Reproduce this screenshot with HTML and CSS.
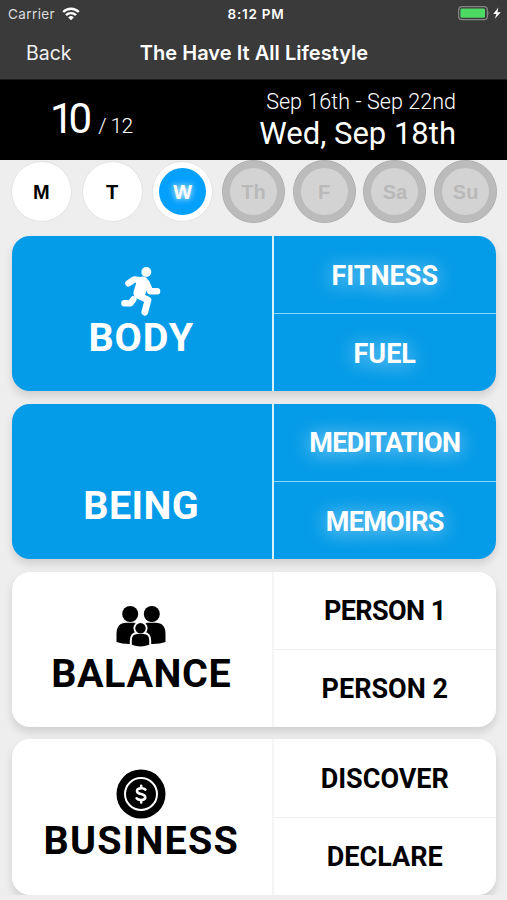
FILE: index.html
```
<!DOCTYPE html>
<html lang="en">
<head>
    <meta charset="UTF-8">
    <meta name="viewport" content="width=device-width, initial-scale=1.0">
    <title>The Have It All Lifestyle</title>
    <link rel="stylesheet" href="styles.css">
</head>
<body>
    <header class="top">
        <div class="status-bar">
            <div class="carrier">
                <span>Carrier</span>
                <svg width="18" height="14" viewBox="0 0 18 14" fill="none" stroke="#fff" stroke-width="2.4">
                    <path d="M1.2 5 A11 11 0 0 1 16.8 5"/>
                    <path d="M4 8.2 A7 7 0 0 1 14 8.2"/>
                    <path d="M9 13.2 L6.2 10.4 A4 4 0 0 1 11.8 10.4 Z" fill="#fff" stroke="none"/>
                </svg>
            </div>
            <div class="clock">8:12 PM</div>
            <div class="battery">
                <svg width="44" height="16" viewBox="0 0 44 16">
                    <rect x="0.6" y="0.6" width="28.8" height="13" rx="3.4" fill="none" stroke="#858585" stroke-width="1.2"/>
                    <rect x="2.4" y="2.4" width="24.6" height="9.4" rx="1.4" fill="#4cd964"/>
                    <path d="M30.6 4.6 Q32.4 7.1 30.6 9.6 Z" fill="#858585"/>
                    <path d="M40.4 1.6 L35.2 8 H38.4 L36.8 12.8 L42.8 6.2 H39.4 Z" fill="#fff"/>
                </svg>
            </div>
        </div>
        <nav class="nav-bar">
            <a class="back">Back</a>
            <h1>The Have It All Lifestyle</h1>
        </nav>
    </header>

    <section class="summary">
        <div class="score"><span class="points">10</span><span class="total">/ 12</span></div>
        <div class="dates">
            <div class="week">Sep 16th - Sep 22nd</div>
            <div class="today">Wed, Sep 18th</div>
        </div>
    </section>

    <main class="content">
        <div class="days">
            <button class="day">M</button>
            <button class="day">T</button>
            <button class="day active"><span>W</span></button>
            <button class="day locked">Th</button>
            <button class="day locked">F</button>
            <button class="day locked">Sa</button>
            <button class="day locked">Su</button>
        </div>

        <div class="cards">
            <div class="card done">
                <div class="category">
                    <svg class="icon" width="50" height="50" viewBox="0 0 50 50" fill="none" stroke="#fff" stroke-linecap="round" stroke-linejoin="round">
                        <circle cx="30.3" cy="6" r="5" fill="#fff" stroke="none"/>
                        <path d="M12.4 17.4 L18.2 13.4 L26.6 14.5" stroke-width="6.4"/>
                        <path d="M26.6 16.5 L23.4 27" stroke-width="12"/>
                        <path d="M30.6 17 L34.1 25.2 H41.1" stroke-width="6.4"/>
                        <path d="M22.6 29.5 L32 34 L28.8 46.2" stroke-width="6.8"/>
                        <path d="M17.4 33.4 L14.6 37.2 H8.4" stroke-width="6.4"/>
                    </svg>
                    <h2 class="body">BODY</h2>
                </div>
                <div class="tasks">
                    <div class="task fitness">FITNESS</div>
                    <div class="task fuel">FUEL</div>
                </div>
            </div>

            <div class="card done">
                <div class="category">
                    <div class="icon empty"></div>
                    <h2 class="being">BEING</h2>
                </div>
                <div class="tasks">
                    <div class="task meditation">MEDITATION</div>
                    <div class="task memoirs">MEMOIRS</div>
                </div>
            </div>

            <div class="card">
                <div class="category">
                    <svg class="icon" width="50" height="50" viewBox="0 -3 50 50">
                        <circle cx="14.2" cy="9" r="8"/>
                        <circle cx="35.8" cy="9" r="8"/>
                        <path d="M.5 37 V29 Q.5 17.8 10.5 17.8 H18 Q23 17.8 25 22 Q27 17.8 32 17.8 H39.5 Q49.5 17.8 49.5 29 V37 Q43 39.5 34 39 H16 Q7 39.5 .5 37 Z"/>
                        <circle cx="24.5" cy="23.2" r="7" fill="#fff"/>
                        <path d="M13.8 42 V36 Q13.8 27 21.5 27 H27.5 Q35.2 27 35.2 36 V42 Z" fill="#fff"/>
                        <circle cx="24.5" cy="23.2" r="5.2"/>
                        <path d="M15.8 39.8 V35 Q15.8 28.9 21.5 28.9 H27.5 Q33.2 28.9 33.2 35 V39.8 Q24.5 43 15.8 39.8 Z"/>
                    </svg>
                    <h2 class="balance">BALANCE</h2>
                </div>
                <div class="tasks">
                    <div class="task person-one">PERSON 1</div>
                    <div class="task person-two">PERSON 2</div>
                </div>
            </div>

            <div class="card">
                <div class="category">
                    <svg class="icon" width="50" height="50" viewBox="0 0 50 50">
                        <circle cx="25" cy="25" r="24.5"/>
                        <circle cx="25" cy="25" r="16" fill="none" stroke="#fff" stroke-width="2"/>
                        <path d="M29.4 20.6 Q28.3 19.2 25.4 19.2 Q21 19.2 21 22 Q21 24.3 25 25 Q29.3 25.8 29.3 28.3 Q29.3 31 25 31 Q21.8 31 20.6 29.3 M25.2 16.8 V19 M25.2 31 V33.4" fill="none" stroke="#fff" stroke-width="2.6" stroke-linecap="round"/>
                    </svg>
                    <h2 class="business">BUSINESS</h2>
                </div>
                <div class="tasks">
                    <div class="task discover">DISCOVER</div>
                    <div class="task declare">DECLARE</div>
                </div>
            </div>
        </div>
    </main>
</body>
</html>
```
FILE: styles.css
```
* {
    box-sizing: border-box;
}
body {
    margin: 0;
    height: 900px;
    overflow: hidden;
    font-family: Inter, Arial, sans-serif;
    background-color: #eeeeee;
}
.top {
    height: 80px;
    background-color: #3a3a3a;
    color: white;
    border-bottom: 1px solid #1c1c1c;
}
.status-bar {
    display: grid;
    grid-template-columns: 1fr auto 1fr;
    align-items: center;
    height: 27px;
    padding: 0 5px 0 8px;
    font-size: 13.5px;
}
.carrier {
    display: flex;
    align-items: center;
    gap: 7px;
    color: #dddddd;
    letter-spacing: 0.4px;
}
.clock {
    font-weight: 600;
    font-size: 13.5px;
    letter-spacing: 0.75px;
    padding-left: 2px;
}
.battery {
    display: flex;
    justify-content: flex-end;
}
.nav-bar {
    display: grid;
    grid-template-columns: 1fr auto 1fr;
    align-items: center;
    height: 51px;
    padding: 0 26px;
}
.back {
    font-size: 19.5px;
    color: #f2f2f2;
}
.nav-bar h1 {
    margin: 0;
    padding-left: 1px;
    font-size: 20px;
    font-weight: 600;
    letter-spacing: 0.03px;
}
.summary {
    display: flex;
    justify-content: space-between;
    height: 80px;
    padding: 0 51px 0 50px;
    background-color: black;
    color: white;
    font-family: Roboto, Arial, sans-serif;
    font-weight: 300;
}
.score {
    display: flex;
    align-items: baseline;
    gap: 11px;
    padding-top: 14px;
}
.points {
    font-size: 42px;
    line-height: 50px;
    font-weight: 400;
    letter-spacing: -5px;
}
.total {
    font-size: 21px;
    letter-spacing: -0.6px;
}
.dates {
    text-align: right;
    padding-top: 9px;
}
.week {
    font-size: 21.5px;
    line-height: 26px;
    letter-spacing: 0.05px;
}
.today {
    font-size: 31px;
    line-height: 37px;
    font-weight: 400;
}
.content {
    height: 735px;
    overflow: hidden;
}
.days {
    display: grid;
    grid-template-columns: repeat(7, 1fr);
    justify-items: center;
    align-items: center;
    height: 63px;
    padding: 0 6px 0 6px;
}
.day {
    display: flex;
    align-items: center;
    justify-content: center;
    width: 61px;
    height: 61px;
    padding: 2px 0 0;
    border: 1px solid #e3e3e3;
    border-radius: 50%;
    background-color: white;
    color: black;
    font-family: "Liberation Sans", Arial, sans-serif;
    font-size: 20px;
    font-weight: bold;
}
.day.active {
    padding: 0;
}
.day.active span {
    width: 47px;
    height: 47px;
    line-height: 49px;
    border-radius: 50%;
    background-color: #05a0fc;
    color: white;
    text-shadow: 0 0 6px white;
}
.day.locked {
    width: 63px;
    height: 63px;
    border: 1px solid #aaaaaa;
    background-color: #d3d3d3;
    box-shadow: inset 0 0 0 7px #bbbbbb;
    color: #b9b9b9;
}
.cards {
    display: flex;
    flex-direction: column;
    gap: 12.4px;
    padding: 13px 11px 0 12px;
}
.card {
    display: flex;
    flex: none;
    height: 155.4px;
    border-radius: 18px;
    overflow: hidden;
    background-color: white;
    color: black;
    box-shadow: 0 5px 9px rgba(0,0,0,0.13);
    font-family: Roboto, Arial, sans-serif;
}
.category {
    flex: none;
    display: flex;
    flex-direction: column;
    align-items: center;
    width: 261.5px;
    padding: 30px 1px 0 0;
    border-right: 2px solid #f5f5f5;
}
.icon {
    display: block;
    flex: none;
}
.icon.empty {
    height: 50px;
}
.category h2 {
    margin: 0;
    font-size: 39.5px;
    line-height: 43px;
    font-weight: bold;
    white-space: nowrap;
}
.category .body {
    letter-spacing: 1px;
}
.category .being {
    letter-spacing: 0.4px;
}
.category .balance {
    letter-spacing: 0.6px;
}
.category .business {
    letter-spacing: 1.2px;
}
.tasks {
    flex: 1;
    display: flex;
    flex-direction: column;
}
.task {
    flex: 1;
    display: flex;
    align-items: center;
    justify-content: center;
    padding-top: 2px;
    font-size: 27px;
    font-weight: bold;
    white-space: nowrap;
}
.meditation,
.memoirs {
    letter-spacing: -0.7px;
}
.person-one {
    letter-spacing: -0.6px;
}
.task + .task {
    border-top: 1px solid #f0f0f0;
}
.done {
    background-color: #049be8;
    color: white;
}
.done .category {
    border-right-color: #d5f1ff;
}
.done .task + .task {
    border-top-color: #8fd6fa;
}
.done .task {
    text-shadow: 0 2px 20px rgba(255,255,255,0.7);
}
```
